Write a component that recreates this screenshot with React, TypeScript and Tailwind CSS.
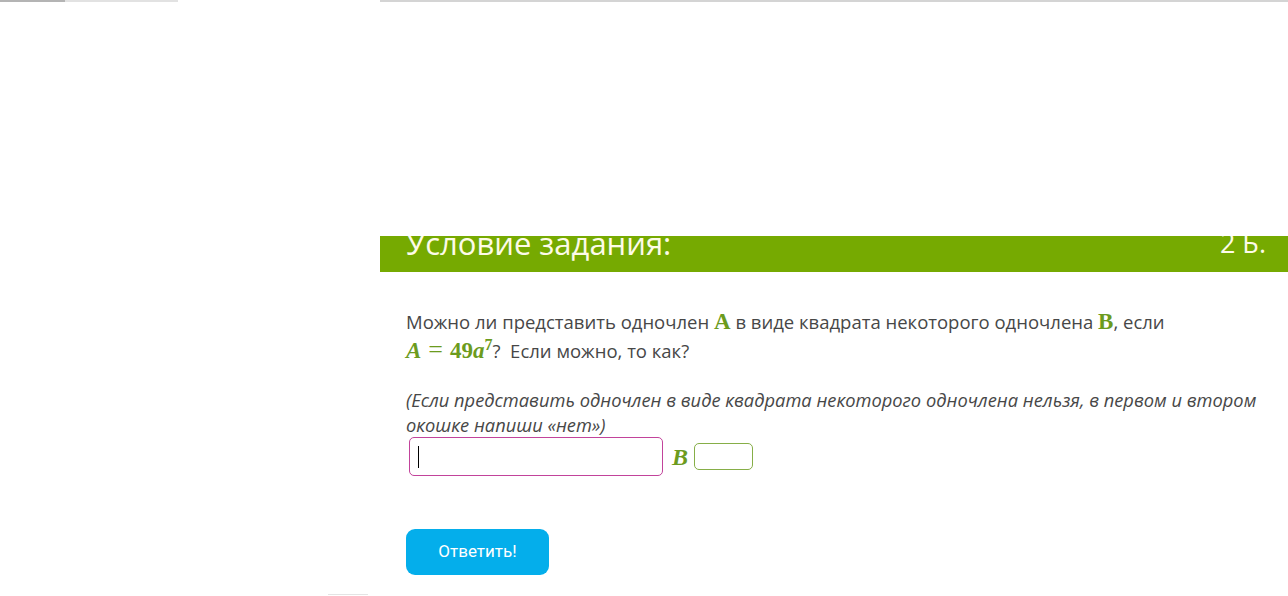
import React from 'react';

const math = "font-['Liberation_Serif',serif] text-[#6c9b1e]";

export default function App() {
  return (
    <div className="relative flex h-[596px] w-[1288px] overflow-hidden bg-white font-['Open_Sans',sans-serif]">
      <div className="flex w-[380px] shrink-0 flex-col">
        <div className="flex h-[2px]">
          <div className="w-[65px] bg-[#b4b4b4]" />
          <div className="w-[113px] bg-[#e2e2e2]" />
        </div>
        <div className="mt-auto mb-[1px] ml-[328px] h-[1px] w-[40px] bg-[#e4e4e4]" />
      </div>

      <div className="flex flex-1 flex-col">
        <div className="h-[2px] bg-[#d4d4d4]" />
        <div className="h-[234px]" />
        <div className="flex h-[36px] items-start justify-between overflow-hidden bg-[#76aa01] pl-[26px] pr-[22px] text-[31px] leading-[36px] text-[#fdfbe8]">
          <span className="mt-[-11px]">Условие задания:</span>
          <span className="mt-[-11px] text-[27px]">2 Б.</span>
        </div>

        <div className="flex flex-col pl-[26px] pr-[22px] pt-[35px] text-[18.5px] text-[#474747]">
          <p className="h-[58px] leading-[29px]">
            Можно ли представить одночлен{' '}
            <span className={`${math} text-[23px] font-bold`}>A</span> в виде квадрата
            некоторого одночлена{' '}
            <span className={`${math} text-[23px] font-bold`}>B</span>, если
            <br />
            <span className={`${math} inline-block whitespace-nowrap text-[23px] font-bold italic leading-[20px]`}>
              A<span className="mx-[7px] text-[26px] font-normal not-italic">=</span>
              <span className="not-italic">49</span>a
              <sup className="not-italic text-[16px]">7</sup>
            </span>
            ?&nbsp; Если можно, то как?
          </p>

          <p className="mt-[22px] text-[18.3px] italic leading-[25px]">
            (Если представить одночлен в виде квадрата некоторого одночлена нельзя, в первом и втором
            окошке напиши «нет»)
          </p>

          <div className="flex items-center">
            <div className="ml-[3px] flex h-[39px] w-[254px] items-center rounded-[5px] border border-[#c2439b] px-[8px]">
              <div className="h-[22px] w-[1px] bg-black" />
            </div>
            <span className={`${math} ml-[9px] text-[24px] font-bold italic`}>B</span>
            <div className="ml-[6px] h-[27px] w-[59px] rounded-[5px] border border-[#86ae47]" />
          </div>

          <button className="mt-[53px] h-[46px] w-[143px] rounded-[9px] bg-[#04aeeb] font-['Roboto',sans-serif] text-[17px] text-white">
            Ответить!
          </button>
        </div>
      </div>
    </div>
  );
}
